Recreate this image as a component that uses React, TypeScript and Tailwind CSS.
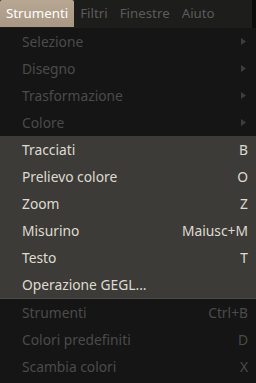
import { ReactNode } from 'react';

type Item = { label: string; accel?: string; submenu?: boolean };

const disabledTop: Item[] = [
  { label: 'Selezione', submenu: true },
  { label: 'Disegno', submenu: true },
  { label: 'Trasformazione', submenu: true },
  { label: 'Colore', submenu: true },
];

const active: Item[] = [
  { label: 'Tracciati', accel: 'B' },
  { label: 'Prelievo colore', accel: 'O' },
  { label: 'Zoom', accel: 'Z' },
  { label: 'Misurino', accel: 'Maiusc+M' },
  { label: 'Testo', accel: 'T' },
  { label: 'Operazione GEGL...' },
];

const disabledBottom: Item[] = [
  { label: 'Strumenti', accel: 'Ctrl+B' },
  { label: 'Colori predefiniti', accel: 'D' },
  { label: 'Scambia colori', accel: 'X' },
];

function Arrow() {
  return (
    <svg width="5" height="7" viewBox="0 0 5 7" className="mr-[2px]">
      <path d="M0 0 L5 3.5 L0 7 Z" fill="#3d3d3d" />
    </svg>
  );
}

function Row({ item, enabled }: { item: Item; enabled: boolean }) {
  let right: ReactNode = null;
  if (item.submenu) right = <Arrow />;
  else if (item.accel) right = <span>{item.accel}</span>;
  return (
    <div
      className={`h-[27px] flex items-center justify-between pl-[22px] pr-[8px] ${
        enabled ? 'text-[#dfdbd2]' : 'text-[#4b4b4b]'
      }`}
    >
      <span>{item.label}</span>
      {right}
    </div>
  );
}

export default function App() {
  return (
    <div
      className="w-[256px] h-[383px] overflow-hidden bg-[#151515] text-[13.8px] leading-none"
      style={{ fontFamily: '"Noto Sans", "DejaVu Sans", sans-serif' }}
    >
      <div className="h-[28px] flex bg-[#1d1d1c] text-[13.3px]">
        <div className="flex flex-1 items-stretch">
          <div className="px-[6px] flex items-center h-[27px] bg-gradient-to-b from-[#b8a893] to-[#a89782] text-[#ffffff] rounded-t-[2px]">
            Strumenti
          </div>
          <div className="px-[6px] flex items-center h-[27px] text-[#5c5c5a]">Filtri</div>
          <div className="px-[6px] flex items-center h-[27px] text-[#5c5c5a]">Finestre</div>
          <div className="px-[6px] flex items-center h-[27px] text-[#5c5c5a]">Aiuto</div>
        </div>
        <div className="w-[4px] bg-[#0b0b0b]" />
      </div>
      <div>
        {disabledTop.map((it) => (
          <Row key={it.label} item={it} enabled={false} />
        ))}
      </div>
      <div className="bg-[#3c3b37] border-b border-[#4a4945]">
        {active.map((it) => (
          <Row key={it.label} item={it} enabled />
        ))}
      </div>
      <div>
        {disabledBottom.map((it) => (
          <Row key={it.label} item={it} enabled={false} />
        ))}
      </div>
    </div>
  );
}
